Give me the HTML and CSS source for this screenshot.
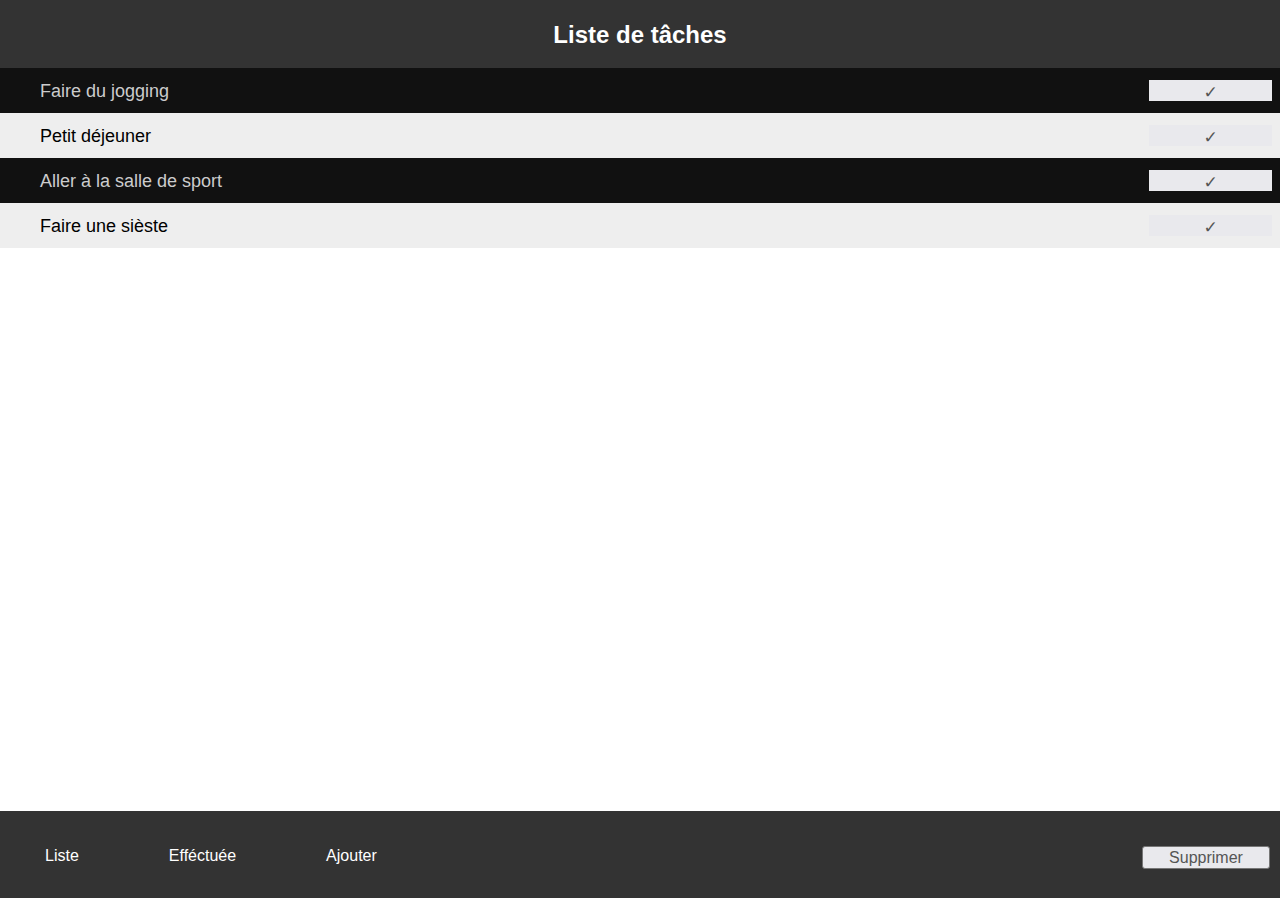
FILE: index.html
```html
<!DOCTYPE html>
<html lang="fr">
<head>
<meta charset="utf-8">
<title>Liste de tâches</title>
<link rel="stylesheet" href="styles.css">
</head>
<body>
<div class="app">
  <header class="header"><h1 class="title">Liste de tâches</h1></header>
  <main class="list">
    <div class="row dark"><span class="label">Faire du jogging</span><button class="check">✓</button></div>
    <div class="row light"><span class="label">Petit déjeuner</span><button class="check">✓</button></div>
    <div class="row dark"><span class="label">Aller à la salle de sport</span><button class="check">✓</button></div>
    <div class="row light"><span class="label">Faire une sièste</span><button class="check">✓</button></div>
  </main>
  <footer class="footer">
    <nav class="nav">
      <a class="nav-link l1">Liste</a>
      <a class="nav-link l2">Efféctuée</a>
      <a class="nav-link l3">Ajouter</a>
    </nav>
    <button class="delete">Supprimer</button>
  </footer>
</div>
</body>
</html>
```
FILE: styles.css
```css
* { box-sizing: border-box; }
html, body { margin: 0; padding: 0; }
body { font-family: "Liberation Sans", Arial, sans-serif; background: #fff; }
.app { display: flex; flex-direction: column; height: 898px; }
.header { height: 68px; background: #333333; display: flex; align-items: center; justify-content: center; }
.title { margin: 0; color: #fff; font-size: 24px; font-weight: bold; padding-top: 1px; }
.list { flex: 1; }
.row { height: 45px; display: flex; align-items: center; justify-content: space-between; padding: 0 8px 0 40px; }
.row.dark { background: #111111; color: #cccccc; }
.row.light { background: #eeeeee; color: #000; }
.label { font-size: 18px; padding-top: 2px; }
.check { width: 123px; height: 21px; border: none; background: #e9e9ed; color: #555; font-family: "DejaVu Sans", sans-serif; font-size: 17px; line-height: 21px; padding: 2px 0 0; margin-top: 0; }
.footer { height: 87px; background: #333333; display: flex; align-items: center; justify-content: space-between; padding: 0 10px 0 45px; }
.nav { display: flex; align-items: center; padding-top: 2px; }
.nav-link { color: #fff; font-size: 16px; }
.l1 { margin-right: 90px; }
.l2 { margin-right: 90px; }
.delete { width: 128px; height: 23px; margin-top: 5px; background: #e9e9ed; border: 1px solid #767676; border-radius: 3px; color: #555; font-family: "Liberation Sans", Arial, sans-serif; font-size: 16px; padding: 1px 0 0; }
```
